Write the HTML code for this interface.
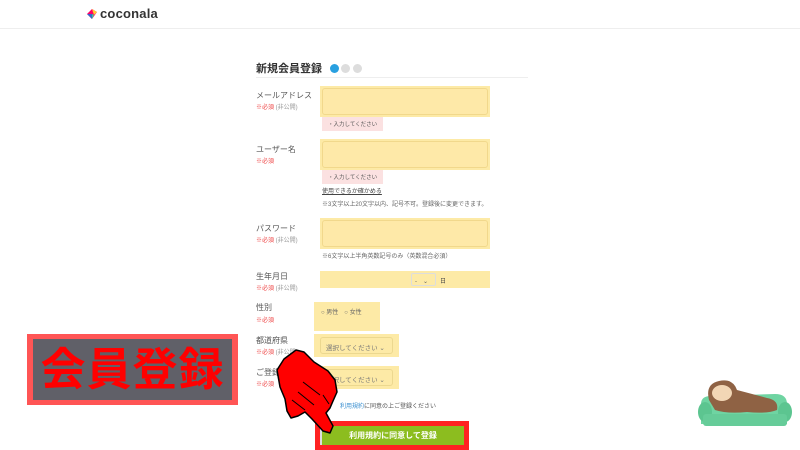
<!DOCTYPE html>
<html><head><meta charset="utf-8"><style>
*{margin:0;padding:0;box-sizing:border-box}
body{width:800px;height:450px;overflow:hidden;background:#fff;font-family:"Liberation Sans","Noto Sans CJK JP",sans-serif;position:relative;color:#444}
.a{position:absolute}
.hdr{left:0;top:0;width:800px;height:29px;border-bottom:1px solid #eee}
.lbl{font-size:8px;color:#555;left:256px}
.req{font-size:6px;color:#e44;left:256px}
.req span{color:#999}
.yb{background:#fdeaa6}
.inp{background:#fdeaa6;width:170px;height:31px;padding:2px}
.inp div{width:100%;height:100%;border:1px solid #f1d88c;border-radius:3px;background:#fee9a8}
.err{background:#fbe1e1;font-size:5.5px;color:#555;padding:3px 6px;left:322px}
.note{font-size:6px;color:#666;left:322px}
</style></head><body>
<div class="a hdr"></div>
<svg class="a" style="left:86px;top:8px" width="12" height="12" viewBox="0 0 12 12"><path d="M6 1L11 4 6 11 1 6Z" fill="#f06"/><path d="M6 1L11 4 8 7Z" fill="#fc3"/><path d="M1 6L6 11 6 6Z" fill="#36c"/><path d="M6 6L8 7 6 11Z" fill="#3c9"/></svg>
<div class="a" style="left:100px;top:6px;font-size:13px;font-weight:bold;color:#333;letter-spacing:.2px">coconala</div>

<div class="a" style="left:256px;top:60px;font-size:11px;font-weight:bold;color:#333">新規会員登録</div>
<div class="a" style="left:330px;top:64px;width:9px;height:9px;border-radius:50%;background:#29a0e0"></div>
<div class="a" style="left:341px;top:64px;width:9px;height:9px;border-radius:50%;background:#ddd"></div>
<div class="a" style="left:353px;top:64px;width:9px;height:9px;border-radius:50%;background:#ddd"></div>
<div class="a" style="left:256px;top:77px;width:272px;height:1px;background:#eee"></div>

<div class="a lbl" style="top:90px">メールアドレス</div>
<div class="a req" style="top:102px">※必須 <span>(非公開)</span></div>
<div class="a inp" style="left:320px;top:86px"><div></div></div>
<div class="a err" style="top:117px">・入力してください</div>

<div class="a lbl" style="top:144px">ユーザー名</div>
<div class="a req" style="top:156px">※必須</div>
<div class="a inp" style="left:320px;top:139px"><div></div></div>
<div class="a err" style="top:170px">・入力してください</div>
<div class="a note" style="top:186px;text-decoration:underline;color:#444">使用できるか確かめる</div>
<div class="a note" style="top:199px">※3文字以上20文字以内、記号不可。登録後に変更できます。</div>

<div class="a lbl" style="top:223px">パスワード</div>
<div class="a req" style="top:235px">※必須 <span>(非公開)</span></div>
<div class="a inp" style="left:320px;top:218px"><div></div></div>
<div class="a note" style="top:251px">※6文字以上半角英数記号のみ（英数混合必須）</div>

<div class="a lbl" style="top:271px">生年月日</div>
<div class="a req" style="top:283px">※必須 <span>(非公開)</span></div>
<div class="a yb" style="left:320px;top:271px;width:170px;height:17px"></div>
<div class="a" style="left:411px;top:273px;width:25px;height:13px;border:1px solid #ddd;border-radius:2px;font-size:6px;padding:2px 3px;color:#666">-　⌄</div>
<div class="a" style="left:440px;top:276px;font-size:6px">日</div>

<div class="a lbl" style="top:302px">性別</div>
<div class="a req" style="top:315px">※必須</div>
<div class="a yb" style="left:314px;top:302px;width:66px;height:29px;font-size:6px;padding:5px 7px;color:#666">○ 男性　○ 女性</div>

<div class="a lbl" style="top:335px">都道府県</div>
<div class="a req" style="top:347px">※必須 <span>(非公開)</span></div>
<div class="a yb" style="left:314px;top:334px;width:85px;height:23px;padding:3px 6px"><div style="border:1px solid #ecd88f;border-radius:3px;height:17px;font-size:6.5px;color:#777;padding:4px 5px">選択してください ⌄</div></div>

<div class="a lbl" style="top:367px">ご登録</div>
<div class="a req" style="top:379px">※必須</div>
<div class="a yb" style="left:314px;top:366px;width:85px;height:23px;padding:3px 6px"><div style="border:1px solid #ecd88f;border-radius:3px;height:17px;font-size:6.5px;color:#777;padding:4px 5px">選択してください ⌄</div></div>

<div class="a" style="left:340px;top:401px;font-size:6px;color:#555"><span style="color:#3a8fd0">利用規約</span>に同意の上ご登録ください</div>
<div class="a" style="left:315px;top:421px;width:154px;height:29px;background:#f22;padding:5px"><div style="background:#8cbd1f;height:19px;border-left:2px solid #ddd;color:#fff;font-size:8px;font-weight:bold;text-align:center;line-height:19px">利用規約に同意して登録</div></div>

<div class="a" style="left:27px;top:334px;width:211px;height:71px;background:#f55;padding:5px 6px"><div style="background:#606068;height:61px;color:#f00;font-size:45px;font-weight:bold;text-align:center;line-height:61px;letter-spacing:1px">会員登録</div></div>

<svg class="a" style="left:0;top:0" width="800" height="450">
<path d="M296,350 L304,352 L314,362 L328,371 L335,380 L337,392 L333,401 L330,408 L326,413 L333,426 L330,433 L323,431 L312,419 L305,412 L298,416 L291,418 L287,411 L285,399 L280,387 L277,370 L284,359 Z" fill="#f00" stroke="#000" stroke-width="1.5" stroke-linejoin="round"/>
<path d="M303,382 L320,395 M298,392 L314,405 M292,400 L305,410 M323,395 L329,404" stroke="#000" stroke-width="1" fill="none"/>
<g transform="translate(697,378)">
<path d="M4,26 Q4,18 14,18 L78,16 Q90,16 90,26 L90,46 L4,46Z" fill="#6fd4a2"/>
<ellipse cx="8" cy="34" rx="7" ry="10" fill="#5cc590"/>
<ellipse cx="88" cy="34" rx="7" ry="10" fill="#5cc590"/>
<rect x="6" y="36" width="84" height="12" rx="3" fill="#66cc99"/>
<path d="M12,22 Q8,6 22,3 Q36,0 40,12 L70,20 Q82,22 80,32 Q70,36 50,34 Q30,36 18,32Z" fill="#8f6244"/>
<ellipse cx="25" cy="15" rx="10" ry="8" fill="#f2d6b5"/>
</g>
</svg>
</body></html>
